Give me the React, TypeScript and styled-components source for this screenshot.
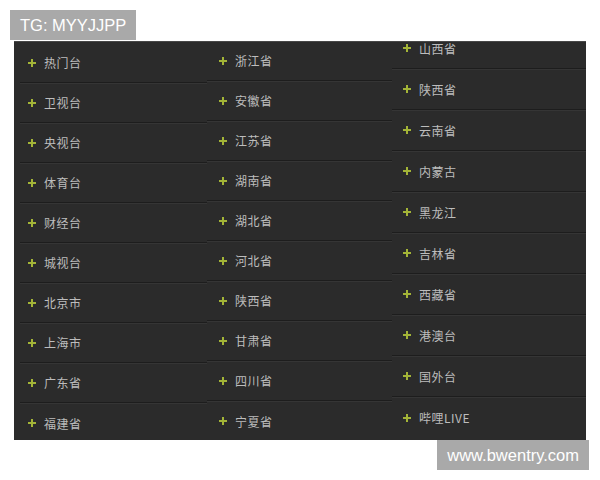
import styled, { createGlobalStyle } from "styled-components"

const GlobalStyle = createGlobalStyle`
    html, body {
        margin: 0;
        padding: 0;
        background: #ffffff;
        font-family: "Liberation Sans", "Noto Sans CJK SC", sans-serif;
    }
`

const Page = styled.div`
    width: 600px;
    height: 480px;
    display: flex;
    flex-direction: column;
    box-sizing: border-box;
    padding-top: 10px;
`

const Tag = styled.div<{ $end?: boolean }>`
    align-self: ${(p) => (p.$end ? "flex-end" : "flex-start")};
    margin: ${(p) => (p.$end ? "0 11px 0 0" : "0 0 0 10px")};
    height: 30px;
    padding: 0 10px;
    background: #a9a9a9;
    color: #ffffff;
    font-size: 16.5px;
    line-height: 30px;
    font-family: "Liberation Sans", Arial, sans-serif;
`

const Panel = styled.div`
    margin: 1px 0 0 14px;
    width: 572px;
    height: 399px;
    background: #2b2b2b;
    border-top: 1px solid #474747;
    box-sizing: border-box;
    overflow: hidden;
    display: grid;
    grid-template-columns: 193px 185px 194px;
`

const Column = styled.div<{ $shift: number; $pad: number }>`
    display: flex;
    flex-direction: column;
    margin-top: ${(p) => p.$shift}px;
    padding-left: ${(p) => p.$pad}px;
`

const Row = styled.div<{ $h: number; $indent: number }>`
    height: ${(p) => p.$h}px;
    flex-shrink: 0;
    display: flex;
    align-items: center;
    gap: 8px;
    padding-left: ${(p) => p.$indent}px;
    box-sizing: border-box;
    border-bottom: 1px solid #1d1d1d;
    box-shadow: 0 1px 0 #353535;
    &:last-child {
        border-bottom: none;
        box-shadow: none;
    }
`

const Label = styled.span`
    color: #bdbdbd;
    font-size: 12px;
    font-family: "Noto Sans CJK SC", "Liberation Sans", sans-serif;
    letter-spacing: 0.5px;
`

const Plus = () => (
    <svg width="8" height="8" viewBox="0 0 8 8">
        <path d="M3 0h2v3h3v2H5v3H3V5H0V3h3z" fill="#a3b437" />
    </svg>
)

const columns = [
    {
        shift: 1, pad: 6, h: 40, indent: 8,
        items: ["热门台", "卫视台", "央视台", "体育台", "财经台", "城视台", "北京市", "上海市", "广东省", "福建省"],
    },
    {
        shift: -1, pad: 0, h: 40, indent: 12,
        items: ["浙江省", "安徽省", "江苏省", "湖南省", "湖北省", "河北省", "陕西省", "甘肃省", "四川省", "宁夏省"],
    },
    {
        shift: -14, pad: 0, h: 41, indent: 11,
        items: ["山西省", "陕西省", "云南省", "内蒙古", "黑龙江", "吉林省", "西藏省", "港澳台", "国外台", "哔哩LIVE"],
    },
]

export const App = () => {
    return (
        <Page>
            <GlobalStyle />
            <Tag>TG: MYYJJPP</Tag>
            <Panel>
                {columns.map((col, i) => (
                    <Column key={i} $shift={col.shift} $pad={col.pad}>
                        {col.items.map((name) => (
                            <Row key={name} $h={col.h} $indent={col.indent}>
                                <Plus />
                                <Label>{name}</Label>
                            </Row>
                        ))}
                    </Column>
                ))}
            </Panel>
            <Tag $end>www.bwentry.com</Tag>
        </Page>
    )
}

export default App
